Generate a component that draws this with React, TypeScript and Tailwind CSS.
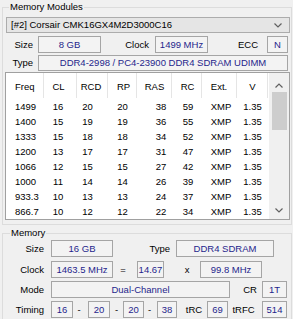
import React from 'react';

const rows = [
  ['1499', '16', '20', '20', '38', '59', 'XMP', '1.35'],
  ['1400', '15', '19', '19', '36', '55', 'XMP', '1.35'],
  ['1333', '15', '18', '18', '34', '52', 'XMP', '1.35'],
  ['1200', '13', '17', '17', '31', '47', 'XMP', '1.35'],
  ['1066', '12', '15', '15', '27', '42', 'XMP', '1.35'],
  ['1000', '11', '14', '14', '26', '39', 'XMP', '1.35'],
  ['933.3', '10', '13', '13', '24', '37', 'XMP', '1.35'],
  ['866.7', '10', '12', '12', '22', '34', 'XMP', '1.35'],
];

// widths and body paddings, measured off the list view
const cols = [
  { name: 'Freq', w: 'w-[38px]', head: 'justify-start pl-[9px]', body: 'justify-start pl-[9px]' },
  { name: 'CL', w: 'w-[33px]', head: 'justify-center pr-[3px]', body: 'justify-center pr-[5px]' },
  { name: 'RCD', w: 'w-[31px]', head: 'justify-center pr-[2px]', body: 'justify-center pr-[10px]' },
  { name: 'RP', w: 'w-[29px]', head: 'justify-center pl-[3px]', body: 'justify-center' },
  { name: 'RAS', w: 'w-[35px]', head: 'justify-center pl-[1px]', body: 'justify-center pl-[13px]' },
  { name: 'RC', w: 'w-[30px]', head: 'justify-center pl-[2px]', body: 'justify-center pl-[2px]' },
  { name: 'Ext.', w: 'w-[35px]', head: 'justify-center', body: 'justify-center pl-[3px]' },
  { name: 'V', w: 'w-[31px]', head: 'justify-center pl-[1px]', body: 'justify-center' },
];

const Field = ({ w, children, h = 'h-[17px]' }: { w: string; children: React.ReactNode; h?: string }) => (
  <div className={`${w} ${h} shrink-0 border border-[#a5a5a5] bg-[#f3f3f3] text-[#1f1f8c] flex items-center justify-center overflow-hidden whitespace-nowrap`}>
    {children}
  </div>
);

const Label = ({ w, className = '', children }: { w: string; className?: string; children: React.ReactNode }) => (
  <div className={`${w} shrink-0 flex items-center whitespace-nowrap ${className}`}>{children}</div>
);

const Chevron = ({ up = false }: { up?: boolean }) => (
  <svg width="8" height="5" viewBox="0 0 8 5">
    <polyline
      points={up ? '0.5,4.5 4,1 7.5,4.5' : '0.5,0.5 4,4 7.5,0.5'}
      fill="none"
      stroke="#606060"
      strokeWidth="1.2"
    />
  </svg>
);

const App: React.FC = () => {
  return (
    <div className="relative w-[293px] h-[319px] overflow-hidden bg-[#f0f0f0] text-black text-[9.5px] leading-none font-['Liberation_Sans',Arial,sans-serif]">
      {/* Memory Modules */}
      <div className="mt-[7px] ml-[2px] w-[290px] h-[218px] border border-[#dcdcdc] flex flex-col">
        <div className="-mt-[8px] ml-[6px] h-[14px] px-[1px] self-start bg-[#f0f0f0] flex items-center">Memory Modules</div>

        <div className="mt-[3px] ml-[3px] w-[284px] h-[16px] border border-[#acacac] bg-[#e5e5e5] flex items-center justify-between pl-[4px] pr-[7px]">
          <span>[#2] Corsair CMK16GX4M2D3000C16</span>
          <Chevron />
        </div>

        <div className="mt-[3px] flex items-center h-[17px]">
          <Label w="w-[35px]" className="justify-end pr-[5px]">Size</Label>
          <Field w="w-[63px]">8 GB</Field>
          <Label w="w-[54px]" className="justify-end pr-[6px]">Clock</Label>
          <Field w="w-[53px]">1499 MHz</Field>
          <Label w="w-[59px]" className="justify-end pr-[9px]">ECC</Label>
          <Field w="w-[21px]">N</Field>
        </div>

        <div className="mt-[2px] flex items-center h-[16px]">
          <Label w="w-[35px]" className="justify-end pr-[5px]">Type</Label>
          <Field w="w-[250px]" h="h-[16px]">DDR4-2998 / PC4-23900 DDR4 SDRAM UDIMM</Field>
        </div>

        <div className="mt-[1px] ml-[2px] w-[285px] h-[148px] border border-[#a0a0a0] bg-white flex">
          <div className="w-[263px] flex flex-col">
            <div className="flex h-[25px]">
              {cols.map((c) => (
                <div key={c.name} className={`${c.w} h-full border-r border-[#e5e5e5] flex items-start pt-[9px] ${c.head}`}>
                  {c.name}
                </div>
              ))}
            </div>
            <div className="mt-[1px] flex flex-col">
              {rows.map((r) => (
                <div key={r[0]} className="flex h-[15px] items-center">
                  {r.map((v, i) => (
                    <div key={i} className={`${cols[i].w} flex items-center ${cols[i].body}`}>{v}</div>
                  ))}
                </div>
              ))}
            </div>
          </div>
          <div className="w-[20px] bg-[#f0f0f0] flex flex-col">
            <div className="h-[19px] flex items-center justify-center pt-[5px]">
              <Chevron up />
            </div>
            <div className="ml-[3px] w-[15px] h-[38px] bg-[#cdcdcd]" />
            <div className="flex-1" />
            <div className="h-[17px] flex items-center justify-center pb-[1px]">
              <Chevron />
            </div>
          </div>
        </div>
      </div>

      {/* Memory */}
      <div className="mt-[8px] ml-[2px] w-[290px] h-[100px] border-x border-t border-[#dcdcdc] flex flex-col">
        <div className="-mt-[7px] ml-[7px] h-[12px] px-[1px] self-start bg-[#f0f0f0] flex items-center">Memory</div>

        <div className="mt-[1px] flex items-center h-[17px]">
          <Label w="w-[48px]" className="justify-end pr-[7px]">Size</Label>
          <Field w="w-[62px]">16 GB</Field>
          <Label w="w-[63px]" className="justify-end pr-[6px]">Type</Label>
          <Field w="w-[98px]">DDR4 SDRAM</Field>
        </div>

        <div className="mt-[4px] flex items-center h-[17px]">
          <Label w="w-[48px]" className="justify-end pr-[7px]">Clock</Label>
          <Field w="w-[62px]">1463.5 MHz</Field>
          <Label w="w-[24px]" className="justify-center pr-[4px]">=</Label>
          <Field w="w-[27px]">14.67</Field>
          <Label w="w-[36px]" className="justify-center pl-[10px]">x</Label>
          <Field w="w-[62px]">99.8 MHz</Field>
        </div>

        <div className="mt-[3px] flex items-center h-[17px]">
          <Label w="w-[48px]" className="justify-end pr-[7px]">Mode</Label>
          <Field w="w-[179px]">Dual-Channel</Field>
          <Label w="w-[32px]" className="justify-center pl-[8px]">CR</Label>
          <Field w="w-[25px]">1T</Field>
        </div>

        <div className="mt-[3px] flex items-center h-[17px]">
          <Label w="w-[48px]" className="justify-end pr-[7px]">Timing</Label>
          <Field w="w-[22px]">16</Field>
          <Label w="w-[15px]" className="justify-center pr-[3px]">-</Label>
          <Field w="w-[22px]">20</Field>
          <Label w="w-[13px]" className="justify-center">-</Label>
          <Field w="w-[21px]">20</Field>
          <Label w="w-[13px]" className="justify-center pr-[2px]">-</Label>
          <Field w="w-[20px]">38</Field>
          <Label w="w-[30px]" className="justify-center pl-[4px]">tRC</Label>
          <Field w="w-[21px]">69</Field>
          <Label w="w-[34px]" className="justify-center pr-[3px]">tRFC</Label>
          <Field w="w-[25px]">514</Field>
        </div>
      </div>
    </div>
  );
};

export default App;
